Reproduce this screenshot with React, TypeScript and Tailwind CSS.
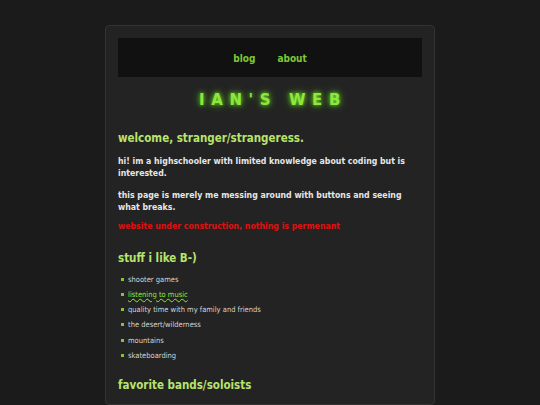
import React from 'react';

const likes = [
  { text: 'shooter games' },
  { text: 'listening to music', link: true },
  { text: 'quality time with my family and friends' },
  { text: 'the desert/wilderness' },
  { text: 'mountains' },
  { text: 'skateboarding' },
];

export default function App() {
  return (
    <div
      className="min-h-screen bg-[#1b1b1b] flex justify-center pt-[25px] overflow-hidden h-[405px]"
      style={{ fontFamily: '"DejaVu Sans Condensed", "DejaVu Sans", Verdana, sans-serif' }}
    >
      <div className="w-[330px] bg-[#232323] border border-[#333] rounded-[4px] px-[12px] pt-[12px] pb-8 shrink-0">
        {/* Nav */}
        <nav className="h-[39px] bg-[#111111] flex items-center justify-center gap-[22px] text-[10px] leading-[14px] pt-[2px] font-bold text-[#7ec832]">
          <a>blog</a>
          <a>about</a>
        </nav>

        <h1
          className="mt-[13px] text-center text-[15px] leading-[20px] font-bold tracking-[6.6px] text-[#8ee83c] pl-[6px]"
          style={{ fontFamily: '"DejaVu Sans", sans-serif', textShadow: '0 0 4px #6fd62a, 0 0 8px #4fa41c' }}
        >
          IAN'S WEB
        </h1>

        <h2 className="mt-[20px] text-[11.5px] leading-[16px] font-bold text-[#b8e46c]">welcome, stranger/strangeress.</h2>
        <p className="mt-[9px] text-[8.7px] font-bold text-[#e6e6e6] leading-[12px]">
          hi! im a highschooler with limited knowledge about coding but is interested.
        </p>
        <p className="mt-[10px] text-[8.7px] font-bold text-[#e6e6e6] leading-[12px]">
          this page is merely me messing around with buttons and seeing what breaks.
        </p>
        <p className="mt-[7px] text-[8.7px] font-bold text-[#e01010] leading-[12px]">
          website under construction, nothing is permenant
        </p>

        <h2 className="mt-[18px] text-[11.5px] leading-[16px] font-bold text-[#b8e46c]">stuff i like B-)</h2>
        <ul className="mt-[8.5px] flex flex-col gap-[6.3px] pl-[3px]">
          {likes.map((item) => (
            <li key={item.text} className="flex items-center gap-[4px] text-[7.5px] leading-[9px] text-[#d4d4d4]">
              <span className="w-[3px] h-[3px] bg-[#7ec832] shrink-0" />
              {item.link ? (
                <span className="text-[#8ee83c] underline decoration-wavy decoration-[#8ee83c]">{item.text}</span>
              ) : (
                <span>{item.text}</span>
              )}
            </li>
          ))}
        </ul>

        <h2 className="mt-[17px] text-[11.5px] leading-[16px] font-bold text-[#b8e46c]">favorite bands/soloists</h2>
        <ul className="mt-[12px] flex flex-col gap-[6px] pl-[3px]">
          <li className="flex items-center gap-[4px] text-[7.5px] leading-[9px] text-[#d4d4d4]">
            <span className="w-[3px] h-[3px] bg-[#7ec832] shrink-0" />
            <span>radiohead</span>
          </li>
        </ul>
      </div>
    </div>
  );
}
